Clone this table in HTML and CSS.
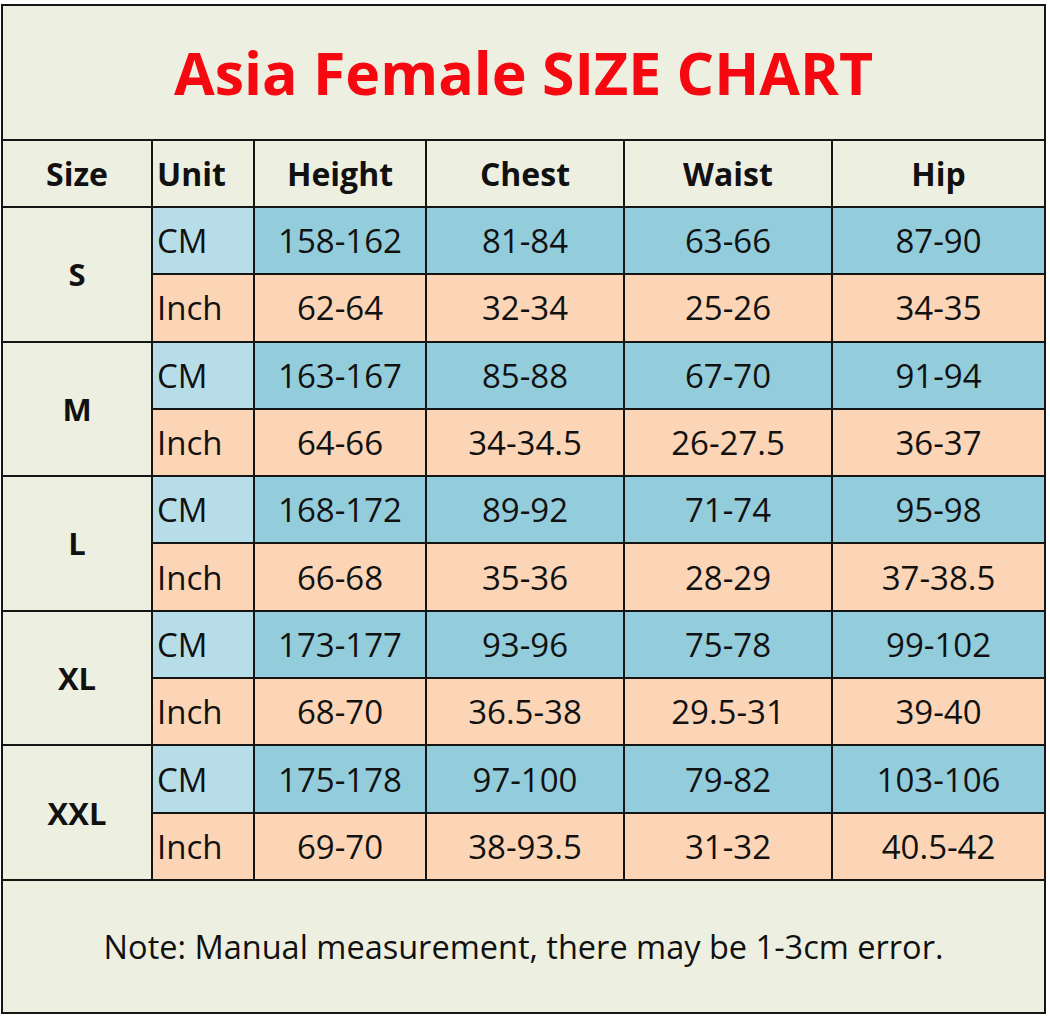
FILE: index.html
```html
<!DOCTYPE html>
<html>
<head>
<meta charset="utf-8">
<link rel="stylesheet" href="styles.css">
</head>
<body>
<table class="chart">
  <colgroup>
    <col class="c-size"><col class="c-unit"><col class="c-h"><col class="c-c"><col class="c-w"><col class="c-hip">
  </colgroup>
  <tr class="title-row"><td colspan="6" class="title">Asia Female SIZE CHART</td></tr>
  <tr class="head-row">
    <th>Size</th><th class="unit-h">Unit</th><th>Height</th><th>Chest</th><th>Waist</th><th>Hip</th>
  </tr>
  <tr class="cm"><td rowspan="2" class="size">S</td><td class="unit">CM</td><td>158-162</td><td>81-84</td><td>63-66</td><td>87-90</td></tr>
  <tr class="inch"><td class="unit">Inch</td><td>62-64</td><td>32-34</td><td>25-26</td><td>34-35</td></tr>
  <tr class="cm"><td rowspan="2" class="size">M</td><td class="unit">CM</td><td>163-167</td><td>85-88</td><td>67-70</td><td>91-94</td></tr>
  <tr class="inch"><td class="unit">Inch</td><td>64-66</td><td>34-34.5</td><td>26-27.5</td><td>36-37</td></tr>
  <tr class="cm"><td rowspan="2" class="size">L</td><td class="unit">CM</td><td>168-172</td><td>89-92</td><td>71-74</td><td>95-98</td></tr>
  <tr class="inch"><td class="unit">Inch</td><td>66-68</td><td>35-36</td><td>28-29</td><td>37-38.5</td></tr>
  <tr class="cm"><td rowspan="2" class="size">XL</td><td class="unit">CM</td><td>173-177</td><td>93-96</td><td>75-78</td><td>99-102</td></tr>
  <tr class="inch"><td class="unit">Inch</td><td>68-70</td><td>36.5-38</td><td>29.5-31</td><td>39-40</td></tr>
  <tr class="cm"><td rowspan="2" class="size">XXL</td><td class="unit">CM</td><td>175-178</td><td>97-100</td><td>79-82</td><td>103-106</td></tr>
  <tr class="inch"><td class="unit">Inch</td><td>69-70</td><td>38-93.5</td><td>31-32</td><td>40.5-42</td></tr>
  <tr class="note-row"><td colspan="6" class="note">Note: Manual measurement, there may be 1-3cm error.</td></tr>
</table>
</body>
</html>
```
FILE: styles.css
```css
html, body {
  margin: 0;
  padding: 0;
  background: #ffffff;
}
body {
  padding: 4px 0 0 1px;
}
.chart {
  border-collapse: collapse;
  table-layout: fixed;
  width: 1045px;
  font-family: "Open Sans", "DejaVu Sans", sans-serif;
  color: #111;
  background: #edf0e1;
}
.chart td, .chart th {
  border: 2px solid #151515;
  padding: 0;
  text-align: center;
  vertical-align: middle;
}
.c-size { width: 150px; }
.c-unit { width: 102px; }
.c-h { width: 172px; }
.c-c { width: 198px; }
.c-w { width: 208px; }
.c-hip { width: 213px; }

.title-row { height: 135px; }
.chart td.title {
  color: #f5080f;
  font-weight: 700;
  font-size: 59px;
  letter-spacing: 0;
  padding-bottom: 2px;
}
.head-row { height: 67px; }
.head-row th {
  font-size: 32px;
  font-weight: 700;
  padding-top: 0;
}
.head-row th.unit-h {
  text-align: left;
  padding-left: 4px;
}
.cm, .inch { height: 67.3px; }
.chart td {
  font-size: 33px;
}
.cm td { background: #93cddc; }
.inch td { background: #fbd5b6; }
.chart td.size {
  background: #edf0e1;
  font-weight: 700;
  font-size: 31px;
}
.cm td.unit { background: #b7dee8; }
.chart td.unit {
  text-align: left;
  padding-left: 4px;
}
.note-row { height: 133px; }
.chart td.note {
  font-size: 32.5px;
  background: #edf0e1;
}
```
